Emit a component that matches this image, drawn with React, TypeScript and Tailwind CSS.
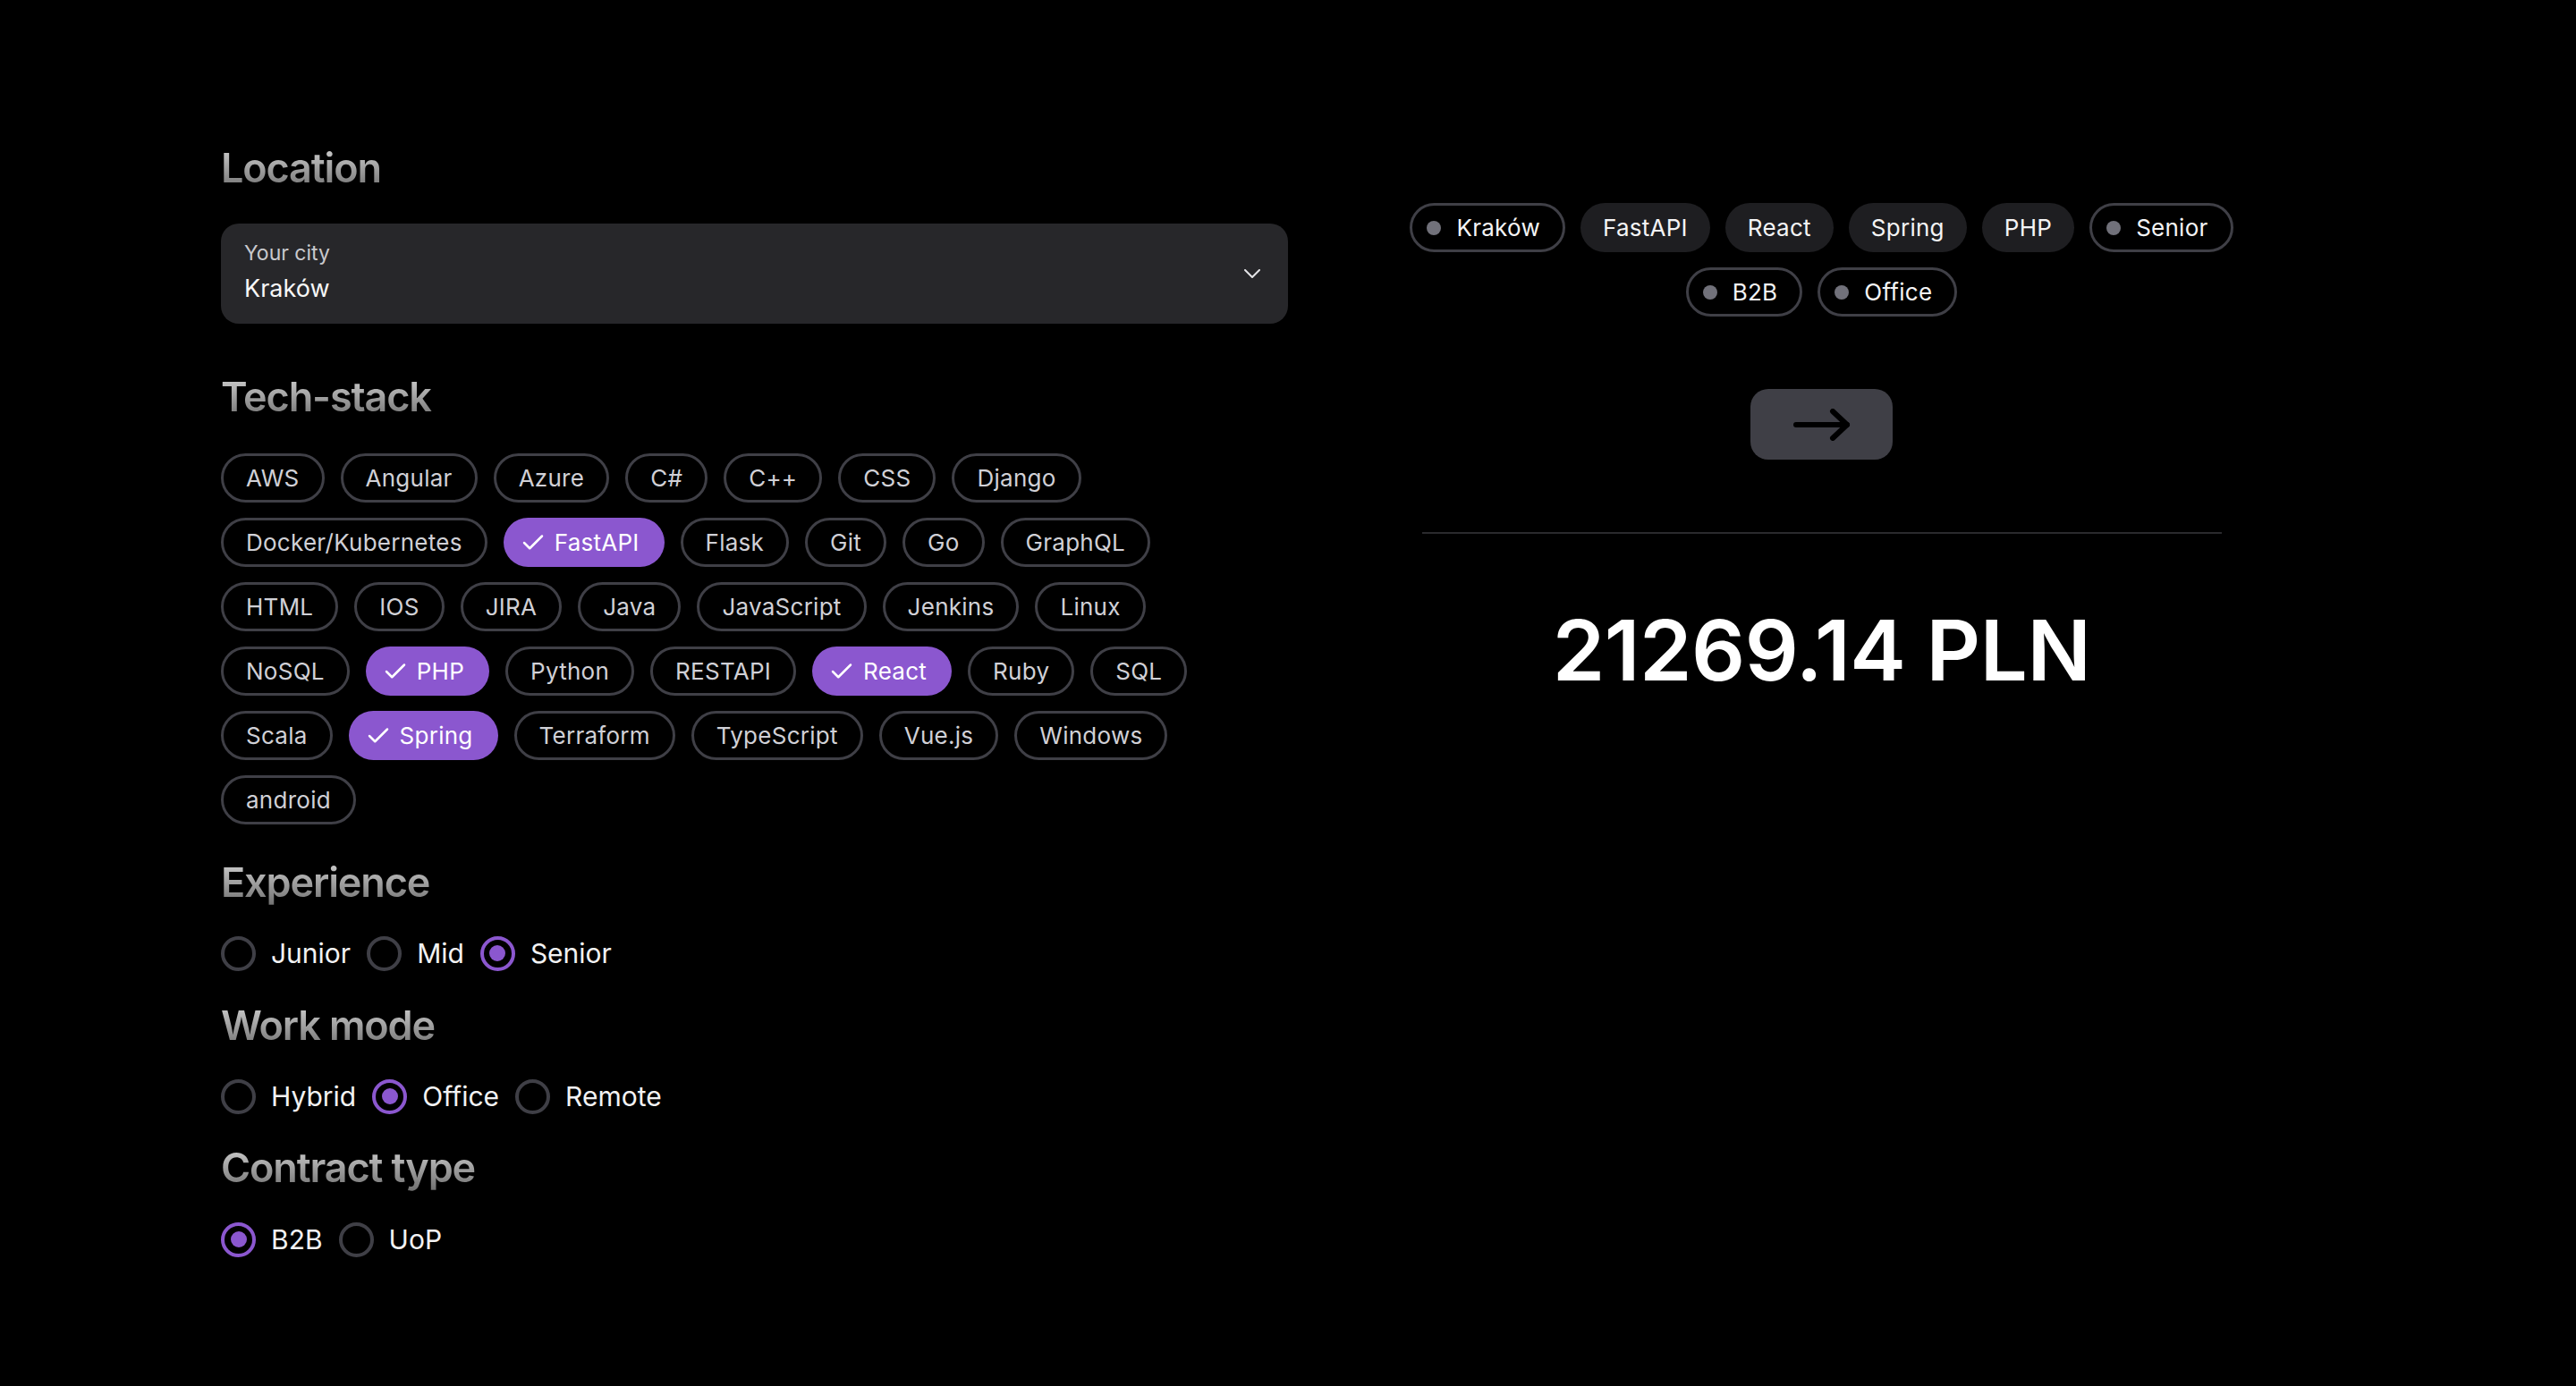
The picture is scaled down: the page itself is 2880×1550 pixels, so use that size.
import { useState } from "react";

const TECH = [
    "AWS", "Angular", "Azure", "C#", "C++", "CSS", "Django",
    "Docker/Kubernetes", "FastAPI", "Flask", "Git", "Go", "GraphQL",
    "HTML", "IOS", "JIRA", "Java", "JavaScript", "Jenkins", "Linux",
    "NoSQL", "PHP", "Python", "RESTAPI", "React", "Ruby", "SQL",
    "Scala", "Spring", "Terraform", "TypeScript", "Vue.js", "Windows",
    "android",
];

function Heading(props: { children: string, className?: string }) {
    return (
        <h2 className={"bg-linear-to-b from-[#d6d6d6] to-[#6e6e6e] bg-clip-text text-[45px] leading-[54px] font-semibold tracking-tight text-transparent " + (props.className ?? "")}>
            {props.children}
        </h2>
    );
}

function CheckIcon() {
    return (
        <svg width="30" height="30" viewBox="0 0 24 24" fill="none" stroke="currentColor" strokeWidth="2" strokeLinecap="round" strokeLinejoin="round">
            <path d="M20 6 9 17l-5-5" />
        </svg>
    );
}

function TechChip(props: { name: string, selected: boolean, onClick: () => void }) {
    if (props.selected) {
        return (
            <button onClick={props.onClick} className="flex h-[55px] items-center gap-[9px] rounded-full border-[3px] border-transparent bg-[#8b57cf] pl-[15px] pr-[25px] text-[26px] tracking-[0.01em] text-white">
                <CheckIcon />
                {props.name}
            </button>
        );
    }
    return (
        <button onClick={props.onClick} className="flex h-[55px] items-center rounded-full border-[3px] border-[#3f3f46] px-[25px] text-[26px] tracking-[0.01em] text-[#d0d0d6]">
            {props.name}
        </button>
    );
}

function RadioGroup(props: { options: string[], value: string, onChange: (v: string) => void, className?: string }) {
    return (
        <div className={"flex items-center gap-[18px] " + (props.className ?? "")}>
            {props.options.map(opt => (
                <label key={opt} className="flex cursor-pointer items-center gap-[17px]" onClick={() => props.onChange(opt)}>
                    {props.value == opt ? (
                        <span className="flex h-[39px] w-[39px] items-center justify-center rounded-full border-[4px] border-[#8b57cf]">
                            <span className="h-[18px] w-[18px] rounded-full bg-[#8b57cf]"></span>
                        </span>
                    ) : (
                        <span className="h-[39px] w-[39px] rounded-full border-[4px] border-[#3f3f46]"></span>
                    )}
                    <span className="text-[30px] leading-[40px] text-[#f2f2f3]">{opt}</span>
                </label>
            ))}
        </div>
    );
}

function SummaryChip(props: { label: string, outlined?: boolean }) {
    if (props.outlined) {
        return (
            <div className="flex h-[55px] items-center gap-[17px] rounded-full border-[3px] border-[#3f3f46] pl-[16px] pr-[25px] text-[26px] tracking-[0.01em] text-[#f4f4f5]">
                <span className="h-[16px] w-[16px] rounded-full bg-[#71717a]"></span>
                {props.label}
            </div>
        );
    }
    return (
        <div className="flex h-[55px] items-center rounded-full border-[3px] border-transparent bg-[#1e1e21] px-[22px] text-[26px] tracking-[0.01em] text-[#f4f4f5]">
            {props.label}
        </div>
    );
}

export default function App() {
    const [selected, setSelected] = useState<string[]>(["FastAPI", "PHP", "React", "Spring"]);
    const [experience, setExperience] = useState("Senior");
    const [workMode, setWorkMode] = useState("Office");
    const [contract, setContract] = useState("B2B");

    const toggle = (name: string) => {
        setSelected(selected.includes(name) ? selected.filter(s => s != name) : [...selected, name]);
    }

    return (
        <div className="min-h-screen bg-black font-['Inter',sans-serif]">
            <div className="mx-auto grid w-[2386px] grid-cols-2 pt-[161px]">
                <div className="flex flex-col">
                    <Heading>Location</Heading>
                    <div className="mt-[35px] flex h-[112px] items-center justify-between rounded-[20px] bg-[#27272a] pl-[26px] pr-[31px]">
                        <div className="flex flex-col self-stretch pt-[18px]">
                            <span className="text-[23px] leading-[30px] text-[#c9c9cd]">Your city</span>
                            <span className="mt-[7px] text-[27px] leading-[36px] text-[#f7f7f7]">Kraków</span>
                        </div>
                        <svg width="18" height="10" viewBox="0 0 18 10" fill="none" stroke="#e4e4e7" strokeWidth="2" strokeLinecap="round" strokeLinejoin="round">
                            <polyline points="1,1 9,9 17,1" />
                        </svg>
                    </div>

                    <Heading className="mt-[55px]">Tech-stack</Heading>
                    <div className="mt-[36px] flex w-[1150px] flex-wrap gap-x-[18px] gap-y-[17px]">
                        {TECH.map(t => (
                            <TechChip key={t} name={t} selected={selected.includes(t)} onClick={() => toggle(t)} />
                        ))}
                    </div>

                    <Heading className="mt-[38px]">Experience</Heading>
                    <RadioGroup className="mt-[32px]" options={["Junior", "Mid", "Senior"]} value={experience} onChange={setExperience} />

                    <Heading className="mt-[34px]">Work mode</Heading>
                    <RadioGroup className="mt-[32px]" options={["Hybrid", "Office", "Remote"]} value={workMode} onChange={setWorkMode} />

                    <Heading className="mt-[33px]">Contract type</Heading>
                    <RadioGroup className="mt-[33px]" options={["B2B", "UoP"]} value={contract} onChange={setContract} />
                </div>

                <div className="flex flex-col items-center pt-[66px]">
                    <div className="flex w-[990px] flex-wrap justify-center gap-[17px]">
                        <SummaryChip label="Kraków" outlined />
                        <SummaryChip label="FastAPI" />
                        <SummaryChip label="React" />
                        <SummaryChip label="Spring" />
                        <SummaryChip label="PHP" />
                        <SummaryChip label={experience} outlined />
                        <SummaryChip label={contract} outlined />
                        <SummaryChip label={workMode} outlined />
                    </div>

                    <button className="mt-[81px] flex h-[79px] w-[159px] items-center justify-center rounded-[20px] bg-[#3f3f46]">
                        <svg width="64" height="36" viewBox="0 0 64 36" fill="none" stroke="#000" strokeWidth="6" strokeLinecap="round" strokeLinejoin="round">
                            <path d="M3 18h57" />
                            <path d="M44 3 60 18 44 33" />
                        </svg>
                    </button>

                    <div className="mt-[81px] h-[2px] w-[894px] bg-[#2a2a2d]"></div>

                    <div className="mt-[83px] text-[94px] leading-[94px] font-semibold tracking-[-0.005em] text-white">
                        21269.14 PLN
                    </div>
                </div>
            </div>
        </div>
    );
}
